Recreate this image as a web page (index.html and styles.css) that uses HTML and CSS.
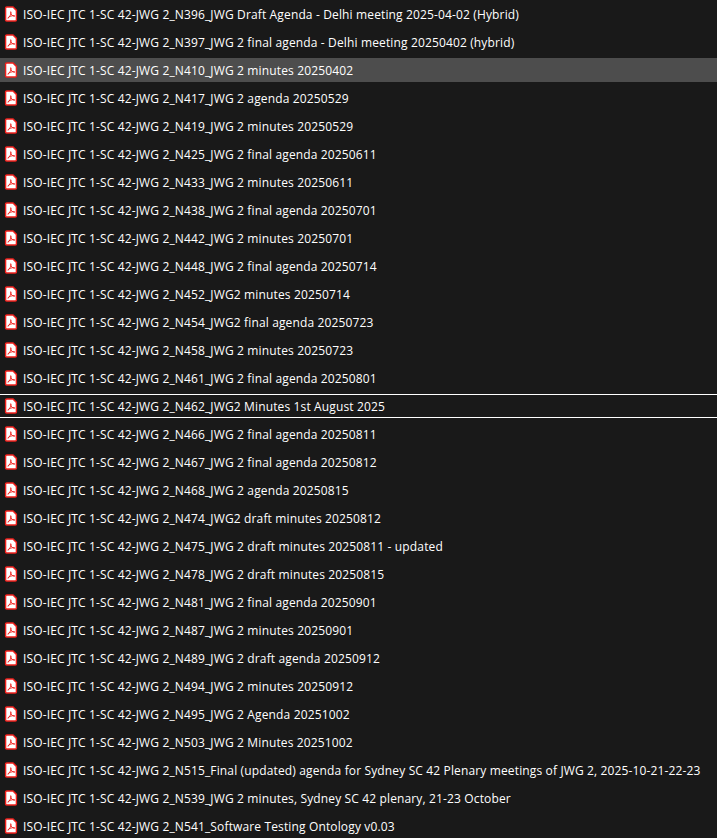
FILE: index.html
```html
<!DOCTYPE html>
<html lang="en">
<head>
<meta charset="utf-8">
<title>JWG 2 documents</title>
<link rel="stylesheet" href="styles.css">
</head>
<body>
<svg class="defs" width="0" height="0" aria-hidden="true"><defs>
<symbol id="pdf" viewBox="0 0 14 16">
<path d="M1.6 2.1Q1.6 1 2.7 1H9L12.4 4.4V13.9Q12.4 15 11.3 15H2.7Q1.6 15 1.6 13.9Z" fill="#fff" stroke="#f0201c" stroke-width="1.4"/>
<path d="M3.9 12.3C5.6 11.2 6.8 8.6 7.1 6.4C7.2 5.4 6.4 5.4 6.5 6.4C6.8 8.4 8.4 10 10.4 10.3C11.1 10.3 11 9.6 10.1 9.6C8 9.6 5.5 10.4 4.3 11.4C3.8 11.9 3.8 12.4 3.9 12.3Z" fill="none" stroke="#ee2420" stroke-width=".9"/>
</symbol></defs></svg>
<ul class="list">
<li class="row"><svg class="ico"><use href="#pdf"/></svg><span class="name">ISO-IEC JTC 1-SC 42-JWG 2_N396_JWG Draft Agenda - Delhi meeting 2025-04-02 (Hybrid)</span></li>
<li class="row"><svg class="ico"><use href="#pdf"/></svg><span class="name">ISO-IEC JTC 1-SC 42-JWG 2_N397_JWG 2 final agenda - Delhi meeting 20250402 (hybrid)</span></li>
<li class="row hover"><svg class="ico"><use href="#pdf"/></svg><span class="name">ISO-IEC JTC 1-SC 42-JWG 2_N410_JWG 2 minutes 20250402</span></li>
<li class="row"><svg class="ico"><use href="#pdf"/></svg><span class="name">ISO-IEC JTC 1-SC 42-JWG 2_N417_JWG 2 agenda 20250529</span></li>
<li class="row"><svg class="ico"><use href="#pdf"/></svg><span class="name">ISO-IEC JTC 1-SC 42-JWG 2_N419_JWG 2 minutes 20250529</span></li>
<li class="row"><svg class="ico"><use href="#pdf"/></svg><span class="name">ISO-IEC JTC 1-SC 42-JWG 2_N425_JWG 2 final agenda 20250611</span></li>
<li class="row"><svg class="ico"><use href="#pdf"/></svg><span class="name">ISO-IEC JTC 1-SC 42-JWG 2_N433_JWG 2 minutes 20250611</span></li>
<li class="row"><svg class="ico"><use href="#pdf"/></svg><span class="name">ISO-IEC JTC 1-SC 42-JWG 2_N438_JWG 2 final agenda 20250701</span></li>
<li class="row"><svg class="ico"><use href="#pdf"/></svg><span class="name">ISO-IEC JTC 1-SC 42-JWG 2_N442_JWG 2 minutes 20250701</span></li>
<li class="row"><svg class="ico"><use href="#pdf"/></svg><span class="name">ISO-IEC JTC 1-SC 42-JWG 2_N448_JWG 2 final agenda 20250714</span></li>
<li class="row"><svg class="ico"><use href="#pdf"/></svg><span class="name">ISO-IEC JTC 1-SC 42-JWG 2_N452_JWG2 minutes 20250714</span></li>
<li class="row"><svg class="ico"><use href="#pdf"/></svg><span class="name">ISO-IEC JTC 1-SC 42-JWG 2_N454_JWG2 final agenda 20250723</span></li>
<li class="row"><svg class="ico"><use href="#pdf"/></svg><span class="name">ISO-IEC JTC 1-SC 42-JWG 2_N458_JWG 2 minutes 20250723</span></li>
<li class="row"><svg class="ico"><use href="#pdf"/></svg><span class="name">ISO-IEC JTC 1-SC 42-JWG 2_N461_JWG 2 final agenda 20250801</span></li>
<li class="row outlined"><svg class="ico"><use href="#pdf"/></svg><span class="name">ISO-IEC JTC 1-SC 42-JWG 2_N462_JWG2 Minutes 1st August 2025</span></li>
<li class="row"><svg class="ico"><use href="#pdf"/></svg><span class="name">ISO-IEC JTC 1-SC 42-JWG 2_N466_JWG 2 final agenda 20250811</span></li>
<li class="row"><svg class="ico"><use href="#pdf"/></svg><span class="name">ISO-IEC JTC 1-SC 42-JWG 2_N467_JWG 2 final agenda 20250812</span></li>
<li class="row"><svg class="ico"><use href="#pdf"/></svg><span class="name">ISO-IEC JTC 1-SC 42-JWG 2_N468_JWG 2 agenda 20250815</span></li>
<li class="row"><svg class="ico"><use href="#pdf"/></svg><span class="name">ISO-IEC JTC 1-SC 42-JWG 2_N474_JWG2 draft minutes 20250812</span></li>
<li class="row"><svg class="ico"><use href="#pdf"/></svg><span class="name">ISO-IEC JTC 1-SC 42-JWG 2_N475_JWG 2 draft minutes 20250811 - updated</span></li>
<li class="row"><svg class="ico"><use href="#pdf"/></svg><span class="name">ISO-IEC JTC 1-SC 42-JWG 2_N478_JWG 2 draft minutes 20250815</span></li>
<li class="row"><svg class="ico"><use href="#pdf"/></svg><span class="name">ISO-IEC JTC 1-SC 42-JWG 2_N481_JWG 2 final agenda 20250901</span></li>
<li class="row"><svg class="ico"><use href="#pdf"/></svg><span class="name">ISO-IEC JTC 1-SC 42-JWG 2_N487_JWG 2 minutes 20250901</span></li>
<li class="row"><svg class="ico"><use href="#pdf"/></svg><span class="name">ISO-IEC JTC 1-SC 42-JWG 2_N489_JWG 2 draft agenda 20250912</span></li>
<li class="row"><svg class="ico"><use href="#pdf"/></svg><span class="name">ISO-IEC JTC 1-SC 42-JWG 2_N494_JWG 2 minutes 20250912</span></li>
<li class="row"><svg class="ico"><use href="#pdf"/></svg><span class="name">ISO-IEC JTC 1-SC 42-JWG 2_N495_JWG 2 Agenda 20251002</span></li>
<li class="row"><svg class="ico"><use href="#pdf"/></svg><span class="name">ISO-IEC JTC 1-SC 42-JWG 2_N503_JWG 2 Minutes 20251002</span></li>
<li class="row"><svg class="ico"><use href="#pdf"/></svg><span class="name">ISO-IEC JTC 1-SC 42-JWG 2_N515_Final (updated) agenda for Sydney SC 42 Plenary meetings of JWG 2, 2025-10-21-22-23</span></li>
<li class="row"><svg class="ico"><use href="#pdf"/></svg><span class="name">ISO-IEC JTC 1-SC 42-JWG 2_N539_JWG 2 minutes, Sydney SC 42 plenary, 21-23 October</span></li>
<li class="row"><svg class="ico"><use href="#pdf"/></svg><span class="name">ISO-IEC JTC 1-SC 42-JWG 2_N541_Software Testing Ontology v0.03</span></li>
</ul>
</body>
</html>
```
FILE: styles.css
```css
html, body { margin: 0; padding: 0; background: #191919; height: 100%; overflow: hidden; }
.defs { position: absolute; }
.list { list-style: none; margin: 0; padding: 2px 0 0; display: flex; flex-direction: column; gap: 4px; }
.row { height: 24px; display: flex; align-items: center; gap: 5px; padding-left: 4px; box-sizing: border-box;
  font: 12px/16px "Open Sans", sans-serif; letter-spacing: 0.14px; color: #fff; white-space: nowrap; }
.name { padding-top: 2px; }
.ico { width: 14px; height: 16px; flex: none; }
.hover { background: #4d4d4d; }
.outlined { border-top: 1px solid #fff; border-bottom: 1px solid #fff; }
```
